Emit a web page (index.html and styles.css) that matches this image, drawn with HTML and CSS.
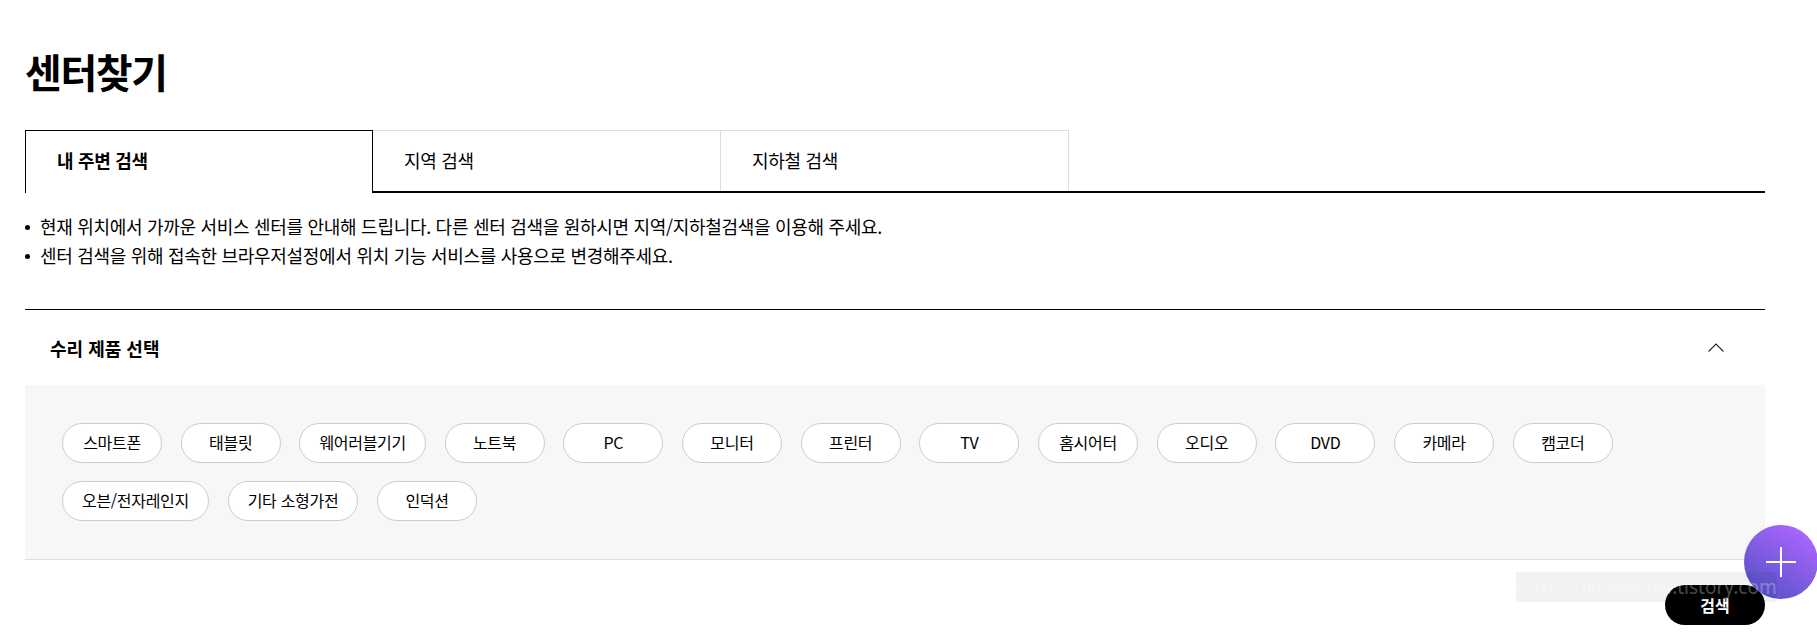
FILE: index.html
```html
<!DOCTYPE html>
<html lang="ko">
<head>
    <meta charset="UTF-8">
    <meta name="viewport" content="width=device-width, initial-scale=1.0">
    <title>센터찾기</title>
    <link rel="stylesheet" href="styles.css">
</head>
<body>
    <div class="page">
        <h1>센터찾기</h1>

        <div class="tabs">
            <a class="tab active">내 주변 검색</a>
            <a class="tab">지역 검색</a>
            <a class="tab">지하철 검색</a>
        </div>

        <ul class="notes">
            <li>현재 위치에서 가까운 서비스 센터를 안내해 드립니다. 다른 센터 검색을 원하시면 지역/지하철검색을 이용해 주세요.</li>
            <li>센터 검색을 위해 접속한 브라우저설정에서 위치 기능 서비스를 사용으로 변경해주세요.</li>
        </ul>

        <div class="product-select">
            <div class="select-head">
                <h2>수리 제품 선택</h2>
                <svg class="chevron" width="16" height="9" viewBox="0 0 16 9">
                    <path d="M0.5 8.5L8 1l7.5 7.5" fill="none" stroke="#222" stroke-width="1.1"/>
                </svg>
            </div>
            <div class="chips">
                <button class="chip">스마트폰</button>
                <button class="chip">태블릿</button>
                <button class="chip">웨어러블기기</button>
                <button class="chip">노트북</button>
                <button class="chip">PC</button>
                <button class="chip">모니터</button>
                <button class="chip">프린터</button>
                <button class="chip">TV</button>
                <button class="chip">홈시어터</button>
                <button class="chip">오디오</button>
                <button class="chip">DVD</button>
                <button class="chip">카메라</button>
                <button class="chip">캠코더</button>
                <button class="chip">오븐/전자레인지</button>
                <button class="chip">기타 소형가전</button>
                <button class="chip">인덕션</button>
            </div>
        </div>

        <div class="actions">
            <button class="search-btn">검색</button>
        </div>
    </div>

    <!-- floating button and blog watermark sit over the page -->
    <div class="fab">
        <svg width="30" height="30" viewBox="0 0 30 30">
            <path d="M15 0v30M0 15h30" stroke="#fff" stroke-width="2"/>
        </svg>
    </div>
    <div class="watermark">https://ilikeyellow.tistory.com</div>
</body>
</html>
```

FILE: styles.css
```css
/* General */
body {
    margin: 0;
    background: #fff;
    color: #000;
    font-family: "Noto Sans CJK KR", "Noto Sans", sans-serif;
    font-size: 16px;
    letter-spacing: -0.4px;
}

.page {
    padding: 51px 52px 17px 25px;
}

h1 {
    margin: 0 0 39px;
    font-size: 40px;
    line-height: 40px;
    font-weight: 700;
    letter-spacing: -1.4px;
}

/* Tabs */
.tabs {
    display: flex;
    align-items: flex-start;
    height: 61px;
    border-bottom: 2px solid #000;
    font-size: 18px;
    letter-spacing: -0.3px;
}

.tab {
    box-sizing: border-box;
    width: 348px;
    height: 61px;
    padding-left: 31px;
    border: 1px solid #ddd;
    border-bottom: 0;
    border-left: 0;
    line-height: 59px;
}

.tab.active {
    height: 63px;
    padding-left: 31px;
    border: 1px solid #000;
    border-bottom: 0;
    background: #fff;
    font-weight: 700;
}

/* Notes */
.notes {
    margin: 19px 0 39px;
    padding: 0;
    list-style: none;
    font-size: 18px;
    line-height: 29px;
    letter-spacing: -0.3px;
}

.notes li {
    position: relative;
    padding-left: 15px;
}

.notes li::before {
    content: "";
    position: absolute;
    left: 0;
    top: 13px;
    width: 5px;
    height: 5px;
    border-radius: 50%;
    background: #000;
}

/* Product select */
.product-select {
    border-top: 1px solid #000;
    border-bottom: 1px solid #ddd;
}

.select-head {
    display: flex;
    justify-content: space-between;
    align-items: center;
    height: 75px;
    padding: 0 41px 0 25px;
}

.select-head h2 {
    margin: 0;
    font-size: 18px;
    font-weight: 700;
    letter-spacing: 0;
}

.chips {
    display: flex;
    flex-wrap: wrap;
    gap: 18px 18.7px;
    padding: 38px 37px;
    background: #f7f7f7;
}

.chip {
    box-sizing: border-box;
    min-width: 100px;
    height: 40px;
    padding: 0 19px 2px;
    border: 1px solid #ccc;
    border-radius: 20px;
    background: #fff;
    color: #000;
    font: inherit;
    letter-spacing: -0.3px;
}

/* Search button */
.actions {
    display: flex;
    justify-content: flex-end;
    margin-top: 25px;
}

.search-btn {
    width: 100px;
    height: 40px;
    padding-bottom: 2px;
    border: 0;
    border-radius: 20px;
    background: #000;
    color: #fff;
    font: inherit;
    font-size: 16px;
    font-weight: 700;
}

/* Overlays */
.fab {
    position: absolute;
    left: 1744px;
    top: 525px;
    width: 74px;
    height: 74px;
    display: flex;
    align-items: center;
    justify-content: center;
    border-radius: 50%;
    background: linear-gradient(215deg, #ad66ff 10%, #5652c8 90%);
}

.watermark {
    position: absolute;
    left: 1516px;
    top: 572px;
    width: 261px;
    height: 30px;
    background: rgba(0, 0, 0, 0.05);
    color: rgba(255, 255, 255, 0.3);
    font-family: "Noto Sans", sans-serif;
    font-size: 19px;
    line-height: 30px;
    letter-spacing: 0;
    white-space: nowrap;
}
```
